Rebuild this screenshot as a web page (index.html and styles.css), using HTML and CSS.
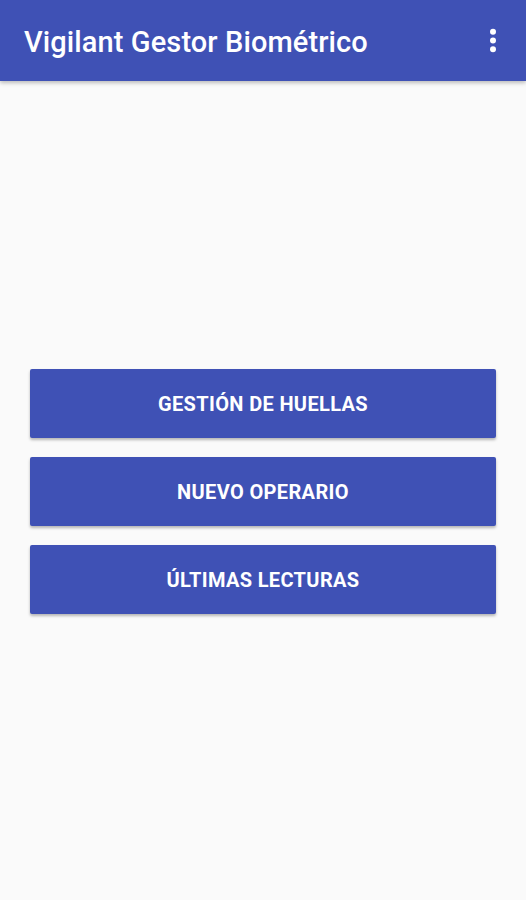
FILE: index.html
```html
<!DOCTYPE html>
<html lang="es">
<head>
<meta charset="utf-8">
<link rel="stylesheet" href="styles.css">
</head>
<body>
<header class="appbar">
  <h1 class="title">Vigilant Gestor Biométrico</h1>
  <div class="menu" aria-label="Más opciones">
    <svg width="8" height="26" viewBox="0 0 8 26"><circle cx="4" cy="3.7" r="3"/><circle cx="4" cy="12.5" r="3"/><circle cx="4" cy="21.3" r="3"/></svg>
  </div>
</header>
<main class="content">
  <div class="buttons">
    <button class="btn">GESTIÓN DE HUELLAS</button>
    <button class="btn">NUEVO OPERARIO</button>
    <button class="btn">ÚLTIMAS LECTURAS</button>
  </div>
</main>
</body>
</html>
```
FILE: styles.css
```css
html, body {
  margin: 0;
  padding: 0;
  height: 100%;
}
body {
  background: #fafafa;
  font-family: Roboto, "Liberation Sans", sans-serif;
  display: flex;
  flex-direction: column;
}
.appbar {
  height: 81px;
  background: #3f51b5;
  display: flex;
  align-items: center;
  justify-content: space-between;
  padding: 0 29px 0 24px;
  box-shadow: 0 2px 4px rgba(0,0,0,0.25);
  position: relative;
  z-index: 1;
  flex-shrink: 0;
}
.title {
  margin: 0;
  color: #fff;
  font-size: 29px;
  font-weight: 500;
  letter-spacing: 0.1px;
  padding-top: 2px;
}
.menu {
  display: flex;
  align-items: center;
  fill: #fff;
  padding-top: 1px;
}
.content {
  flex: 1;
  display: flex;
  padding: 288px 30px 0 30px;
}
.buttons {
  flex: 1;
  display: flex;
  flex-direction: column;
  gap: 19px;
}
.btn {
  height: 69px;
  border: none;
  border-radius: 2px;
  background: #3f51b5;
  color: #fff;
  font-family: Roboto, "Liberation Sans", sans-serif;
  font-weight: 700;
  font-size: 20px;
  letter-spacing: 0.35px;
  box-shadow: 0 2px 3px rgba(0,0,0,0.28);
  padding: 0;
}
```
